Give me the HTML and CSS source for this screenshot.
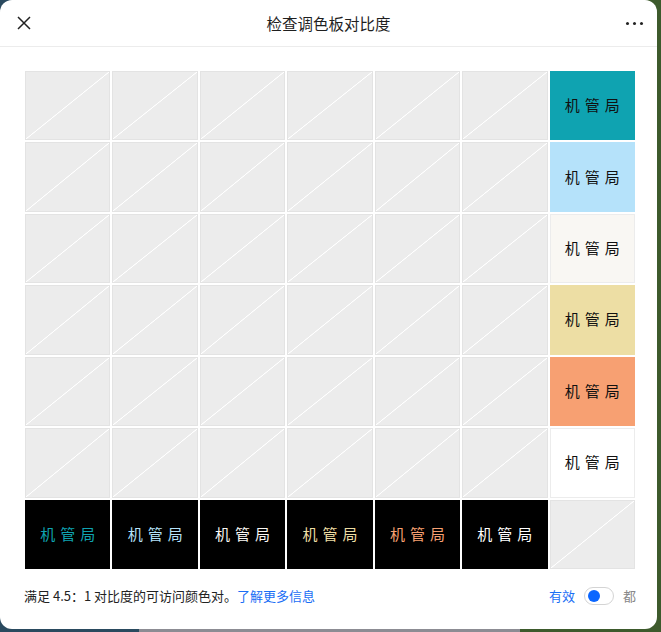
FILE: index.html
```html
<!DOCTYPE html>
<html lang="zh-CN">
<head>
<meta charset="utf-8">
<title>检查调色板对比度</title>
<link rel="stylesheet" href="styles.css">
</head>
<body>
<div class="dialog">
  <header class="header">
    <button class="icon-btn close" aria-label="关闭">
      <svg width="14" height="14" viewBox="0 0 14 14"><path d="M1 1L13 13M13 1L1 13" stroke="#222" stroke-width="1.5" fill="none"/></svg>
    </button>
    <h1 class="title">检查调色板对比度</h1>
    <button class="icon-btn more" aria-label="更多">
      <span class="dot"></span><span class="dot"></span><span class="dot"></span>
    </button>
  </header>
  <main class="content">
    <div class="grid">
      <div class="cell na"></div><div class="cell na"></div><div class="cell na"></div><div class="cell na"></div><div class="cell na"></div><div class="cell na"></div>
      <div class="cell bg-teal fg-black">机管局</div>

      <div class="cell na"></div><div class="cell na"></div><div class="cell na"></div><div class="cell na"></div><div class="cell na"></div><div class="cell na"></div>
      <div class="cell bg-blue fg-black">机管局</div>

      <div class="cell na"></div><div class="cell na"></div><div class="cell na"></div><div class="cell na"></div><div class="cell na"></div><div class="cell na"></div>
      <div class="cell bg-offwhite fg-black bordered">机管局</div>

      <div class="cell na"></div><div class="cell na"></div><div class="cell na"></div><div class="cell na"></div><div class="cell na"></div><div class="cell na"></div>
      <div class="cell bg-tan fg-black">机管局</div>

      <div class="cell na"></div><div class="cell na"></div><div class="cell na"></div><div class="cell na"></div><div class="cell na"></div><div class="cell na"></div>
      <div class="cell bg-salmon fg-black">机管局</div>

      <div class="cell na"></div><div class="cell na"></div><div class="cell na"></div><div class="cell na"></div><div class="cell na"></div><div class="cell na"></div>
      <div class="cell bg-white fg-black bordered">机管局</div>

      <div class="cell bg-black fg-teal">机管局</div>
      <div class="cell bg-black fg-blue">机管局</div>
      <div class="cell bg-black fg-offwhite">机管局</div>
      <div class="cell bg-black fg-tan">机管局</div>
      <div class="cell bg-black fg-salmon">机管局</div>
      <div class="cell bg-black fg-white">机管局</div>
      <div class="cell na"></div>
    </div>
    <footer class="footer">
      <p class="note">满足 4.5：1 对比度的可访问颜色对。<a class="link" href="#">了解更多信息</a></p>
      <div class="filter">
        <span class="opt active">有效</span>
        <span class="toggle"><span class="knob"></span></span>
        <span class="opt">都</span>
      </div>
    </footer>
  </main>
</div>
</body>
</html>
```
FILE: styles.css
```css
* { box-sizing: border-box; }
html, body { margin: 0; padding: 0; }
body {
  width: 661px;
  height: 632px;
  overflow: hidden;
  font-family: "Noto Sans CJK SC", "Noto Sans", "Liberation Sans", sans-serif;
  background: linear-gradient(to right, #2a4a5f 0 139px, #8c8c93 139px 520px, #3d5a2c 520px);
}
.dialog {
  width: 657px;
  height: 629px;
  background: #fff;
  border-radius: 12px;
  overflow: hidden;
}
.header {
  height: 47px;
  border-bottom: 1px solid #ececec;
  display: grid;
  grid-template-columns: 1fr auto 1fr;
  align-items: center;
  padding: 0 14px 0 17px;
}
.icon-btn {
  border: 0;
  background: none;
  padding: 0;
  display: flex;
  align-items: center;
  cursor: pointer;
}
.close { justify-self: start; }
.close svg { display: block; }
.more { justify-self: end; gap: 4px; }
.dot {
  width: 3px;
  height: 3px;
  border-radius: 50%;
  background: #222;
}
.title {
  margin: 0 0 0 -3px;
  font-size: 15.5px;
  font-weight: 400;
  color: #1f1f1f;
  line-height: 20px;
}
.content {
  padding: 24px 0 0 25px;
}
.grid {
  width: 610px;
  display: grid;
  grid-template-columns: repeat(7, 1fr);
  grid-auto-rows: 69.43px;
  gap: 2px;
}
.cell {
  display: flex;
  align-items: center;
  justify-content: center;
  font-size: 15px;
  letter-spacing: 5px;
  padding: 0 0 2px 5px;
  line-height: 1;
}
.na {
  border: 1px solid #e3e3e3;
  background: linear-gradient(to bottom right, #ececec calc(50% - 0.7px), #ffffff calc(50% - 0.2px), #ffffff calc(50% + 0.2px), #ececec calc(50% + 0.7px));
}
.bordered { border: 1px solid #ececec; }
.bg-teal { background: #0fa3b1; }
.bg-blue { background: #b5e2fa; }
.bg-offwhite { background: #f9f7f3; }
.bg-tan { background: #eddea4; }
.bg-salmon { background: #f7a072; }
.bg-white { background: #ffffff; }
.bg-black { background: #000000; }
.fg-black { color: #111; }
.fg-teal { color: #0fa3b1; }
.fg-blue { color: #b5e2fa; }
.fg-offwhite { color: #f9f7f3; }
.fg-tan { color: #eddea4; }
.fg-salmon { color: #f7a072; }
.fg-white { color: #ffffff; }
.footer {
  width: 612px;
  margin-top: 15px;
  height: 24px;
  display: flex;
  align-items: center;
  justify-content: space-between;
  margin-left: -1px;
}
.note {
  margin: 0;
  font-size: 13px;
  color: #222;
  line-height: 18px;
}
.link {
  color: #1a6ef5;
  text-decoration: none;
}
.filter {
  display: flex;
  align-items: center;
  gap: 9px;
  font-size: 13px;
  line-height: 18px;
}
.opt { color: #888; }
.opt.active { color: #1a6ef5; }
.toggle {
  width: 30px;
  height: 18px;
  border: 1px solid #d4d4d4;
  border-radius: 9px;
  background: #fff;
  display: flex;
  align-items: center;
  padding-left: 3px;
}
.knob {
  width: 12px;
  height: 12px;
  border-radius: 50%;
  background: #0a66ff;
}
```
